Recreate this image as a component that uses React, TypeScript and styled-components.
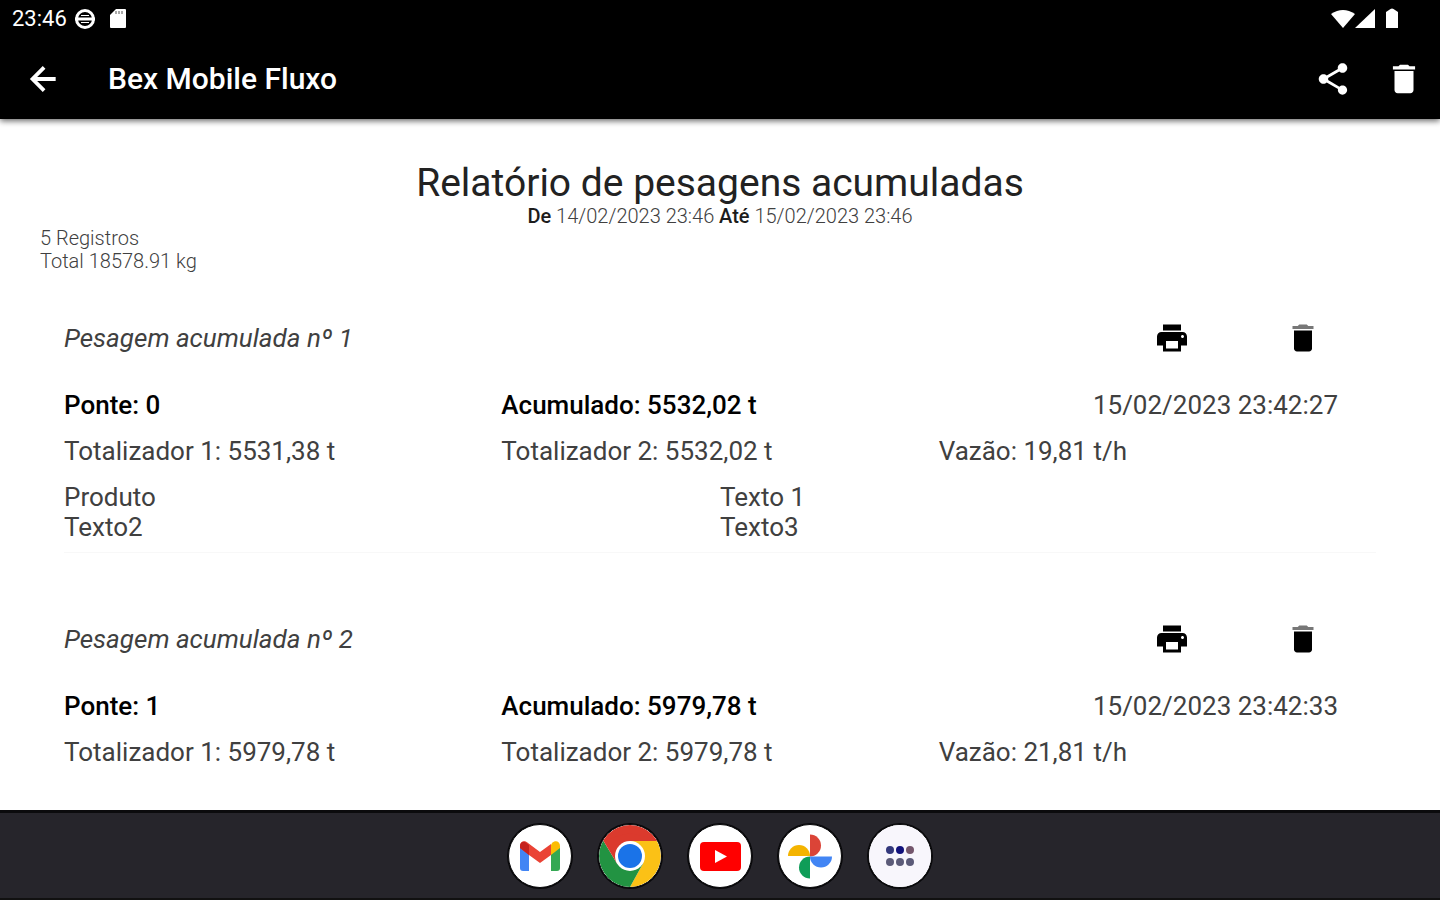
import React from "react";
import styled, { createGlobalStyle } from "styled-components";
import { MdDelete, MdPrint, MdShare } from "react-icons/md";

const GlobalStyle = createGlobalStyle`
  * { box-sizing: border-box; }
  body {
    margin: 0;
    background: #fff;
    color: #404040;
    font-family: Roboto, "Liberation Sans", sans-serif;
  }
  h1, h2, h3, p, ul { margin: 0; padding: 0; }
  ul { list-style: none; }
`;

const Screen = styled.div`
  display: flex;
  flex-direction: column;
  min-height: 100vh;
`;

const Top = styled.header`
  position: relative;
  background: #000;
  color: #fff;
  box-shadow: 0 2px 6px rgba(0, 0, 0, 0.6);
`;

const StatusBar = styled.div`
  display: flex;
  align-items: center;
  justify-content: space-between;
  height: 38px;
  padding: 0 40px 0 12px;
`;

const StatusGroup = styled.div<{ $gap: number }>`
  display: flex;
  align-items: center;
  gap: ${(p) => p.$gap}px;
`;

const Clock = styled.time`
  font-size: 22px;
  line-height: 38px;
  margin-right: 7px;
`;

const AppBar = styled.div`
  display: flex;
  align-items: center;
  height: 81px;
  padding: 0 16px 0 23px;
`;

const IconButton = styled.button<{ $size: number }>`
  display: flex;
  align-items: center;
  justify-content: center;
  width: ${(p) => p.$size}px;
  height: ${(p) => p.$size}px;
  padding: 0;
  border: 0;
  background: none;
  color: inherit;
  cursor: pointer;
`;

const AppTitle = styled.h1`
  flex: 1;
  margin-left: 45px;
  font-size: 30px;
  line-height: 40px;
  font-weight: 500;
`;

const AppActions = styled.div`
  display: flex;
  gap: 31px;
`;

const Report = styled.main`
  flex: 1;
  padding: 42px 64px 20px;
`;

const ReportTitle = styled.h2`
  font-size: 39px;
  line-height: 44px;
  font-weight: 400;
  color: #222;
  text-align: center;
`;

const Period = styled.p`
  font-size: 20px;
  line-height: 22px;
  font-weight: 300;
  text-align: center;

  b { font-weight: 500; color: #1c1c1c; }
`;

const Summary = styled.div`
  margin: 0 0 30px -24px;
  font-size: 20px;
  line-height: 23px;
  font-weight: 300;
`;

const Entry = styled.li`
  padding-bottom: 10px;
  border-bottom: 1px solid #f8f8f8;

  & + & { margin-top: 51px; }
  &:last-child { border-bottom: 0; }
`;

const EntryHead = styled.div`
  display: flex;
  align-items: center;
  height: 70px;
  margin-bottom: 9px;
  padding-right: 55px;
`;

const EntryTitle = styled.h3`
  flex: 1;
  font-size: 26px;
  line-height: 30px;
  font-weight: 400;
  font-style: italic;
`;

const EntryActions = styled.div`
  display: flex;
  gap: 95px;
  color: #000;
`;

const Row = styled.div<{ $cols: number }>`
  display: grid;
  grid-template-columns: repeat(${(p) => p.$cols}, 1fr);
  padding: ${(p) => (p.$cols === 3 ? 8 : 0)}px 0;
  font-size: 26px;
  line-height: 30px;
  font-weight: 400;

  b { font-weight: 500; color: #000; }
`;

const Stamp = styled.time`
  padding-right: 38px;
  text-align: right;
`;

const Texts = styled.div`
  padding-top: 8px;
`;

const Dock = styled.nav`
  display: flex;
  align-items: center;
  justify-content: center;
  gap: 26px;
  height: 90px;
  border-top: 3px solid #0b0b0d;
  border-bottom: 2px solid #111;
  background: #26252b;
`;

const DockButton = styled.button`
  display: flex;
  width: 64px;
  height: 64px;
  padding: 0;
  border: 1px solid #08080a;
  border-radius: 50%;
  overflow: hidden;
  background: #fff;
  box-shadow: 0 0 0 1px #08080a;
  cursor: pointer;

  svg { width: 62px; height: 62px; }
`;

type Weighing = {
  id: number;
  bridge: number;
  accumulated: string;
  stamp: string;
  total1: string;
  total2: string;
  flow: string;
  texts?: string[][];
};

const weighings: Weighing[] = [
  {
    id: 1, bridge: 0, accumulated: "5532,02", stamp: "15/02/2023 23:42:27",
    total1: "5531,38", total2: "5532,02", flow: "19,81",
    texts: [["Produto", "Texto 1"], ["Texto2", "Texto3"]],
  },
  {
    id: 2, bridge: 1, accumulated: "5979,78", stamp: "15/02/2023 23:42:33",
    total1: "5979,78", total2: "5979,78", flow: "21,81",
  },
];

const Gmail = () => (
  <svg viewBox="0 0 62 62">
    <path d="M11 21v22a3 3 0 0 0 3 3h6V27z" fill="#4285f4" />
    <path d="M42 27v19h6a3 3 0 0 0 3-3V21z" fill="#34a853" />
    <path d="M42 20v10l9-7v-2c0-5-5-6-8-3z" fill="#fbbc04" />
    <path d="M11 23v-2c0-5 5-6 8-3l12 9 11-8v11l-11 8-11-8z" fill="#ea4335" />
    <path d="M11 23v-2c0-3 2-5 5-4l4 3v10z" fill="#c5221f" />
  </svg>
);

const Chrome = () => (
  <svg viewBox="0 0 62 62">
    <path d="M31 31 4.2 15.5A31 31 0 0 1 57.8 15.5z" fill="#db3a2d" />
    <path d="M31 16H58A31 31 0 0 1 31 62L44 38.5z" fill="#fbc116" />
    <path d="M4.2 15.5A31 31 0 0 0 31 62L44 38.5 31 31 18 38.5z" fill="#229342" />
    <path d="M4.2 15.5 18 38.5 31 16H58L57 14 30 8z" fill="#db3a2d" />
    <circle cx="31" cy="31" r="15" fill="#fff" />
    <circle cx="31" cy="31" r="12" fill="#1a73e8" />
  </svg>
);

const YouTube = () => (
  <svg viewBox="0 0 62 62">
    <rect x="11" y="17" width="41" height="29" rx="4" fill="#f00" />
    <path d="M26 25v13l12-6.5z" fill="#fff" />
  </svg>
);

const Photos = () => (
  <svg viewBox="0 0 62 62">
    <path d="M31 9.500a11 11 0 0 1 0 22z" fill="#db4437" />
    <path d="M53 31.500a11 11 0 0 1-22 0z" fill="#4285f4" />
    <path d="M31 53.500a11 11 0 0 1 0-22z" fill="#0f9d58" />
    <path d="M9 31a11 11 0 0 1 22 0z" fill="#f4b400" />
  </svg>
);

const AllApps = () => (
  <svg viewBox="0 0 62 62">
    <rect width="62" height="62" fill="#f8f6fc" />
    <g fill="#5b5a78">
      <circle cx="21" cy="25" r="4" fill="#33387c" />
      <circle cx="31" cy="25" r="4" fill="#12127c" />
      <circle cx="41" cy="25" r="4" fill="#74566c" />
      <circle cx="21" cy="37" r="4" />
      <circle cx="31" cy="37" r="4" />
      <circle cx="41" cy="37" r="4" />
    </g>
  </svg>
);

const dockApps = [
  { name: "Gmail", Icon: Gmail },
  { name: "Chrome", Icon: Chrome },
  { name: "YouTube", Icon: YouTube },
  { name: "Fotos", Icon: Photos },
  { name: "Todos os apps", Icon: AllApps },
];

export default function App() {
  return (
    <Screen>
      <GlobalStyle />
      <Top>
        <StatusBar>
          <StatusGroup $gap={0}>
            <Clock>23:46</Clock>
            <StatusGroup $gap={13}>
              <svg width="22" height="22" viewBox="0 0 22 22" fill="none" stroke="#fff">
                <circle cx="11" cy="11" r="8.5" strokeWidth="3" />
                <path d="M1 11h20" strokeWidth="3" />
                <path d="M7 7.5h8M7 14.5h8" strokeWidth="1" />
              </svg>
              <svg width="18" height="22" viewBox="0 0 18 22">
                <path d="M7 1h9a1 1 0 0 1 1 1v17a1 1 0 0 1-1 1H2a1 1 0 0 1-1-1V7z" fill="#fff" />
                <path d="M7 3v3M10 3v3M13 3v3" stroke="#555" strokeWidth="1" />
              </svg>
            </StatusGroup>
          </StatusGroup>
          <StatusGroup $gap={0}>
            <svg width="24" height="22" viewBox="0 0 24 22">
              <path d="M0 6q12-8 24 0L12 20z" fill="#fff" />
            </svg>
            <svg width="21" height="22" viewBox="0 0 21 22">
              <path d="M20 1v19H0z" fill="#fff" />
            </svg>
            <svg width="24" height="22" viewBox="0 0 24 22">
              <path d="M10 4l3-2q3-3 6 0l3 2v16H10z" fill="#fff" />
            </svg>
          </StatusGroup>
        </StatusBar>
        <AppBar>
          <IconButton type="button" aria-label="Voltar" $size={40}>
            <svg width="38" height="38" viewBox="0 0 24 24" fill="none" stroke="currentColor" strokeWidth="2.4">
              <path d="M20 12H5.500M12.700 4.700 5.400 12l7.300 7.300" />
            </svg>
          </IconButton>
          <AppTitle>Bex Mobile Fluxo</AppTitle>
          <AppActions>
            <IconButton type="button" aria-label="Compartilhar" $size={40}>
              <MdShare size={38} />
            </IconButton>
            <IconButton type="button" aria-label="Excluir tudo" $size={40}>
              <MdDelete size={38} />
            </IconButton>
          </AppActions>
        </AppBar>
      </Top>

      <Report>
        <ReportTitle>Relatório de pesagens acumuladas</ReportTitle>
        <Period>
          <b>De</b> 14/02/2023 23:46 <b>Até</b> 15/02/2023 23:46
        </Period>
        <Summary>
          <p>5 Registros</p>
          <p>Total 18578.91 kg</p>
        </Summary>
        <ul>
          {weighings.map((w) => (
            <Entry key={w.id}>
              <EntryHead>
                <EntryTitle>Pesagem acumulada nº {w.id}</EntryTitle>
                <EntryActions>
                  <IconButton type="button" aria-label={`Imprimir ${w.id}`} $size={36}>
                    <MdPrint size={36} />
                  </IconButton>
                  <IconButton type="button" aria-label={`Excluir ${w.id}`} $size={36}>
                    <svg width="36" height="36" viewBox="0 0 24 24">
                      <path d="M19 4h-3.5l-1-1h-5l-1 1H5v2h14z" fill="#777" />
                      <path d="M6 19c0 1.1.9 2 2 2h8c1.1 0 2-.9 2-2V7H6z" fill="currentColor" />
                    </svg>
                  </IconButton>
                </EntryActions>
              </EntryHead>
              <Row $cols={3}>
                <b>Ponte: {w.bridge}</b>
                <b>Acumulado: {w.accumulated} t</b>
                <Stamp>{w.stamp}</Stamp>
              </Row>
              <Row $cols={3}>
                <span>Totalizador 1: {w.total1} t</span>
                <span>Totalizador 2: {w.total2} t</span>
                <span>Vazão: {w.flow} t/h</span>
              </Row>
              {w.texts && (
                <Texts>
                  {w.texts.map((pair) => (
                    <Row key={pair[0]} $cols={2}>
                      {pair.map((text) => (
                        <span key={text}>{text}</span>
                      ))}
                    </Row>
                  ))}
                </Texts>
              )}
            </Entry>
          ))}
        </ul>
      </Report>

      <Dock aria-label="Aplicativos">
        {dockApps.map(({ name, Icon }) => (
          <DockButton key={name} type="button" aria-label={name}>
            <Icon />
          </DockButton>
        ))}
      </Dock>
    </Screen>
  );
}
